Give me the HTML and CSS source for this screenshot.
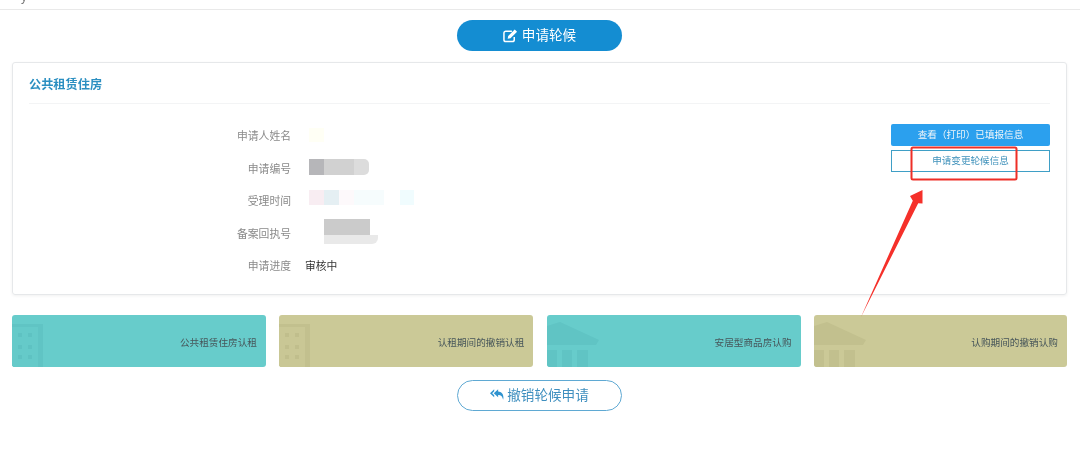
FILE: index.html
```html
<!DOCTYPE html>
<html lang="zh-CN">
<head>
<meta charset="utf-8">
<title>申请轮候</title>
<link rel="stylesheet" href="styles.css">
</head>
<body>
<div class="page">
<header class="topbar"><span class="crumb">y</span></header>
<div class="action action-top">
  <button class="pill pill-solid" type="button">
    <svg class="pill-icon" viewBox="0 0 16 16" aria-hidden="true"><path d="M12 9.500v3a2 2 0 0 1-2 2H3a2 2 0 0 1-2-2V5.500a2 2 0 0 1 2-2h6.500" fill="none" stroke="#fff" stroke-width="1.600"/><path d="M5.500 8.500 12.500 1.500l2.500 2.500-7 7-3 .5z" fill="#fff"/></svg>
    <span>申请轮候</span>
  </button>
</div>
<main class="card">
  <h2 class="card-title">公共租赁住房</h2>
  <div class="card-body">
    <dl class="info">
      <div class="row"><dt>申请人姓名</dt><dd><span class="mosaic m-name"><i></i></span></dd></div>
      <div class="row"><dt>申请编号</dt><dd><span class="mosaic m-no"><i></i><i></i><i></i></span></dd></div>
      <div class="row"><dt>受理时间</dt><dd><span class="mosaic m-time"><i></i><i></i><i></i><i></i><i></i></span></dd></div>
      <div class="row"><dt>备案回执号</dt><dd><span class="mosaic m-rec"><i></i><i></i></span></dd></div>
      <div class="row"><dt>申请进度</dt><dd class="status">审核中</dd></div>
    </dl>
    <div class="side">
      <button class="btn btn-solid" type="button">查看（打印）已填报信息</button>
      <button class="btn btn-line" type="button">申请变更轮候信息</button>
    </div>
  </div>
</main>
<section class="tiles">
  <a class="tile tile-teal">
    <svg class="tile-icon" viewBox="0 0 40 52" aria-hidden="true"><path class="fill-a" d="M0 9h31v43H0z"/><path class="fill-b" d="M0 12h26v40H0z"/><path class="fill-c" d="M6 18h4v4H6zM16 18h4v4h-4zM6 30h4v4H6zM16 30h4v4h-4zM6 40h4v4H6zM16 40h4v4h-4z"/></svg>
    <span>公共租赁住房认租</span>
  </a>
  <a class="tile tile-olive">
    <svg class="tile-icon" viewBox="0 0 40 52" aria-hidden="true"><path class="fill-a" d="M0 9h31v43H0z"/><path class="fill-b" d="M0 12h26v40H0z"/><path class="fill-c" d="M6 18h4v4H6zM16 18h4v4h-4zM6 30h4v4H6zM16 30h4v4h-4zM6 40h4v4H6zM16 40h4v4h-4z"/></svg>
    <span>认租期间的撤销认租</span>
  </a>
  <a class="tile tile-teal">
    <svg class="tile-icon tile-icon-wide" viewBox="0 0 60 52" aria-hidden="true"><path class="fill-a" d="M0 11 13 7l39 18-3 5H0zM0 35h10v17H0zM15 35h10v17H15zM30 35h11v17H30z"/></svg>
    <span>安居型商品房认购</span>
  </a>
  <a class="tile tile-olive">
    <svg class="tile-icon tile-icon-wide" viewBox="0 0 60 52" aria-hidden="true"><path class="fill-a" d="M0 11 13 7l39 18-3 5H0zM0 35h10v17H0zM15 35h10v17H15zM30 35h11v17H30z"/></svg>
    <span>认购期间的撤销认购</span>
  </a>
</section>
<div class="action action-bottom">
  <button class="pill pill-line" type="button">
    <svg class="pill-icon pill-icon-reply" viewBox="0 0 16 13" aria-hidden="true"><path d="M4.800.5 0 5l4.800 4.500V7.300L2.500 5l2.300-2.300z" fill="#2f93cf"/><path d="M9.300.5 4.300 5l5 4.500V7c3 0 4.700 1 5.700 5.500C16.300 7 13.800 3.300 9.300 3z" fill="#2f93cf"/></svg>
    <span>撤销轮候申请</span>
  </button>
</div>
<svg class="annotation" viewBox="0 0 1080 456" aria-hidden="true">
  <rect x="911.500" y="147.500" width="105" height="32" rx="1.500" fill="none" stroke="#ee2f27" stroke-width="2"/>
  <path d="M861 317 912.800 200.700 910 196 922.500 190 922.500 203.500 918.200 203.300z" fill="#f5302a"/>
</svg>
</div>
</body>
</html>
```
FILE: styles.css
```css
* { box-sizing: border-box; }
html, body { margin: 0; padding: 0; background: #fff; }
.page {
  position: relative;
  width: 1080px;
  height: 456px;
  overflow: hidden;
  background: #fff;
  font-family: "Liberation Sans", "Noto Sans CJK SC", sans-serif;
  color: #333;
  filter: blur(.3px);
}
.topbar {
  height: 10px;
  border-bottom: 1px solid #e9e9e9;
  padding-left: 21px;
  overflow: hidden;
}
.crumb {
  display: block;
  margin-top: -9px;
  font-size: 12px;
  line-height: 12px;
  color: #777;
}
.action { display: flex; justify-content: center; padding-right: 1px; }
.action-top { padding-top: 10px; }
.action-bottom { padding-top: 13px; }
.pill {
  width: 165px;
  height: 31px;
  border-radius: 16px;
  display: flex;
  align-items: center;
  justify-content: center;
  gap: 4px;
  padding: 0;
  font: inherit;
  font-size: 13.600px;
  line-height: 1;
}
.pill-solid { background: #148dd2; border: 0; color: #fff; }
.pill-line { background: #fff; border: 1px solid #5fa9d3; color: #3f8fbf; gap: 3px; }
.pill-icon { width: 15px; height: 15px; flex: none; }
.pill-icon-reply { height: 13px; width: 14px; margin-top: -2px; }
.card {
  margin: 11px 13px 0 12px;
  height: 233px;
  border: 1px solid #e6e8ea;
  border-radius: 3px;
  box-shadow: 0 1px 3px rgba(0, 0, 0, .06);
  padding: 0 16px;
}
.card-title {
  margin: 0;
  height: 41px;
  line-height: 45px;
  font-size: 12.200px;
  font-weight: 700;
  color: #2b8fc1;
  border-bottom: 1px solid #f3f4f5;
}
.card-body { display: flex; justify-content: space-between; padding-top: 15px; }
.info { margin: 0; display: flex; flex-direction: column; }
.row {
  display: flex;
  align-items: center;
  height: 32.500px;
}
.row dt {
  width: 262px;
  text-align: right;
  font-size: 10.800px;
  color: #8a8a8a;
}
.row dd { margin: 0 0 0 14px; font-size: 10.800px; }
.status { color: #333; }
.mosaic { display: flex; margin-left: 4px; }
.mosaic i { display: block; }
.m-name i { width: 15px; height: 14px; background: #fffff5; }
.m-no { margin-top: -1px; }
.m-no i { height: 16px; }
.m-no i:nth-child(1) { width: 15px; background: #b6b6b9; }
.m-no i:nth-child(2) { width: 30px; background: #d1d1d1; }
.m-no i:nth-child(3) { width: 15px; background: #dcdcdc; border-radius: 0 5px 5px 0; }
.m-time { margin-top: -6px; }
.m-time i { height: 15px; }
.m-time i:nth-child(1) { width: 15px; background: #f8edf2; }
.m-time i:nth-child(2) { width: 15px; background: #e5eff3; }
.m-time i:nth-child(3) { width: 15px; background: #fdf9fb; }
.m-time i:nth-child(4) { width: 30px; background: #f6fcfd; margin-right: 16px; }
.m-time i:nth-child(5) { width: 14px; background: #f0fcfe; }
.m-rec { margin-left: 19px; width: 55px; flex-wrap: wrap; margin-top: -3px; }
.m-rec i:nth-child(1) { width: 46px; height: 16px; background: #cbcbcb; }
.m-rec i:nth-child(2) { width: 54px; height: 9px; background: #e9e9e9; border-radius: 0 0 6px 0; }
.side { width: 159px; display: flex; flex-direction: column; gap: 4px; padding-top: 5px; }
.btn {
  height: 22px;
  padding: 0;
  font: inherit;
  font-size: 9.600px;
  line-height: 1;
  border-radius: 2px;
}
.btn-solid { background: #2ba0ee; border: 0; color: #f3f7f9; }
.btn-line { background: #fff; border: 1px solid #3f9fc6; border-radius: 0; color: #4092bb; }
.tiles {
  display: grid;
  grid-template-columns: 254px 254px 254px 253px;
  column-gap: 13.300px;
  margin: 20px 0 0 12px;
}
.tile {
  height: 52px;
  border-radius: 3px;
  overflow: hidden;
  display: flex;
  align-items: center;
  justify-content: space-between;
  padding-right: 9px;
  font-size: 9.650px;
  color: #47565a;
}
.tile span { margin-top: 1px; }
.tile-teal { background: #67cccb; }
.tile-olive { background: #cbc997; }
.tile-teal .fill-a { fill: #60c4c4; }
.tile-teal .fill-b { fill: #65cac9; }
.tile-teal .fill-c { fill: #5ec2c2; }
.tile-olive .fill-a { fill: #c2c08e; }
.tile-olive .fill-b { fill: #c9c795; }
.tile-olive .fill-c { fill: #c0be8c; }
.tile-icon { width: 40px; height: 52px; flex: none; }
.tile-icon-wide { width: 60px; }
.annotation {
  position: absolute;
  left: 0;
  top: 0;
  width: 1080px;
  height: 456px;
  pointer-events: none;
}
```
